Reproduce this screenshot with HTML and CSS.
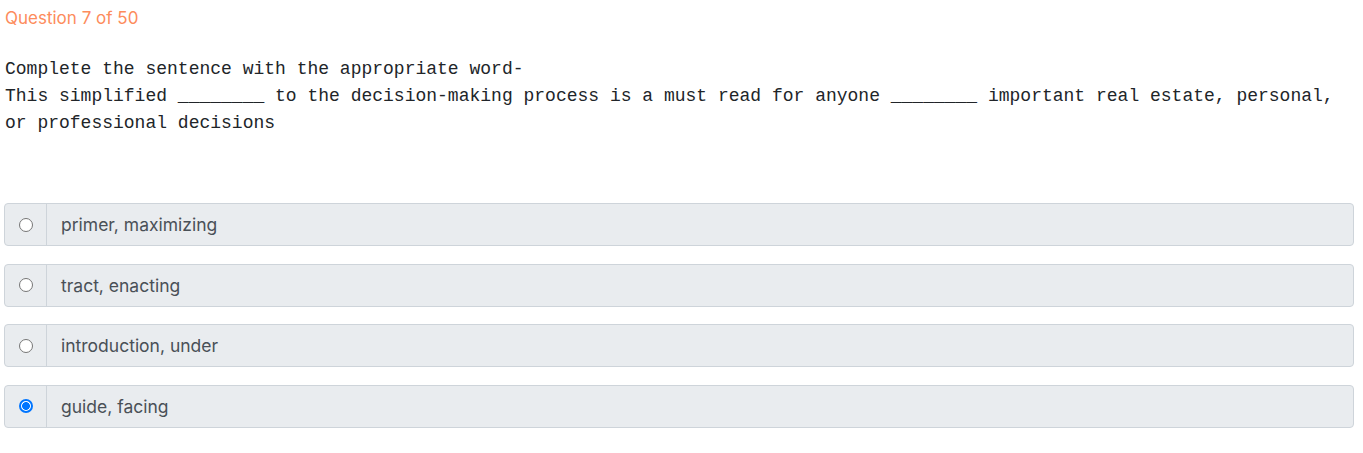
FILE: index.html
```html
<!DOCTYPE html>
<html>
<head>
<meta charset="utf-8">
<link rel="stylesheet" href="styles.css">
</head>
<body>
<div class="quiz">
  <div class="counter">Question 7 of 50</div>
  <div class="question">Complete the sentence with the appropriate word-
This simplified ________ to the decision-making process is a must read for anyone ________ important real estate, personal, or professional decisions</div>
  <div class="options">
    <label class="option">
      <span class="radio-cell"><input type="radio" name="q7"></span>
      <span class="label-text">primer, maximizing</span>
    </label>
    <label class="option">
      <span class="radio-cell"><input type="radio" name="q7"></span>
      <span class="label-text">tract, enacting</span>
    </label>
    <label class="option">
      <span class="radio-cell"><input type="radio" name="q7"></span>
      <span class="label-text">introduction, under</span>
    </label>
    <label class="option">
      <span class="radio-cell"><input type="radio" name="q7" checked></span>
      <span class="label-text">guide, facing</span>
    </label>
  </div>
</div>
</body>
</html>
```

FILE: styles.css
```css
html, body {
  margin: 0;
  padding: 0;
  background: #ffffff;
}

.quiz {
  padding: 8px 9px 0 4px;
}

.counter {
  font-family: Inter, "Noto Sans", sans-serif;
  font-size: 17px;
  line-height: 20px;
  color: #fd8c5c;
  padding-left: 1px;
}

.question {
  margin-top: 28px;
  font-family: "Liberation Mono", "DejaVu Sans Mono", monospace;
  font-size: 18px;
  line-height: 27px;
  color: #212529;
  white-space: pre-wrap;
  padding-left: 1px;
}

.options {
  margin-top: 66px;
  display: flex;
  flex-direction: column;
  gap: 17.67px;
}

.option {
  display: flex;
  align-items: stretch;
  height: 43px;
  box-sizing: border-box;
  border: 1px solid #ced4da;
  border-radius: 4px;
  background: #e9ecef;
  cursor: pointer;
}

.radio-cell {
  width: 41px;
  display: flex;
  align-items: center;
  justify-content: center;
  border-right: 1px solid #ced4da;
}

.radio-cell input {
  appearance: none;
  -webkit-appearance: none;
  margin: 0;
  width: 14px;
  height: 14px;
  box-sizing: border-box;
  border: 1px solid #767676;
  border-radius: 50%;
  background: #ffffff;
}

.radio-cell input:checked {
  border: 2px solid #0075ff;
  background: radial-gradient(circle, #0075ff 0 3.6px, #ffffff 4.2px);
}

.label-text {
  display: flex;
  align-items: center;
  padding-left: 14px;
  font-family: Inter, "Noto Sans", sans-serif;
  font-size: 17.5px;
  color: #495057;
}
```
